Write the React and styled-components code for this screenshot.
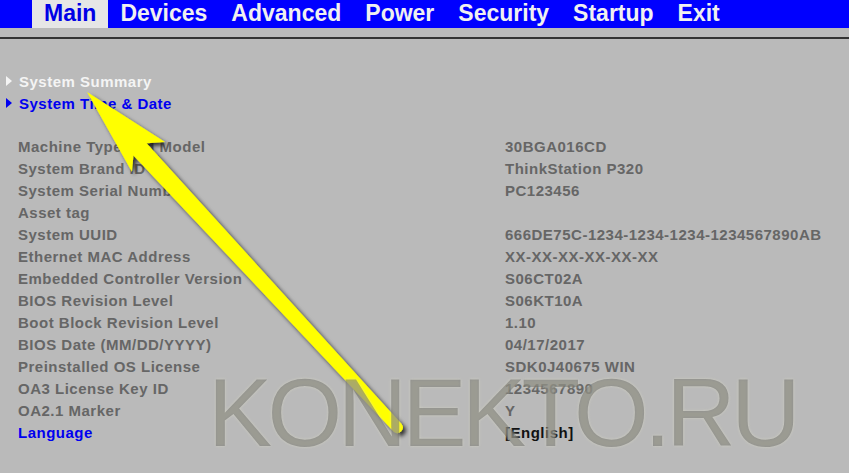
import React from "react";
import styled, { createGlobalStyle } from "styled-components";

const GlobalStyle = createGlobalStyle`
  html, body {
    margin: 0;
    padding: 0;
    background: #bababa;
  }
  body {
    font-family: "Liberation Sans", Arial, sans-serif;
  }
`;

const Page = styled.div`
  position: relative;
  width: 849px;
  height: 473px;
  overflow: hidden;
  background: #bababa;
`;

const MenuBar = styled.nav`
  display: flex;
  height: 28px;
  padding-left: 32px;
  background: #0000ff;
`;

const Tab = styled.div`
  padding: 0 12px;
  height: 28px;
  line-height: 26px;
  font-size: 23px;
  font-weight: bold;
  color: ${(p) => (p.$active ? "#0000e6" : "#f0f0f0")};
  background: ${(p) => (p.$active ? "#e6e6e6" : "transparent")};
`;

const Divider = styled.div`
  margin-top: 9px;
  height: 2px;
  background: #333333;
`;

const Content = styled.section`
  padding-top: 31px;
  font-size: 15px;
  font-weight: bold;
  letter-spacing: 0.5px;
`;

const LinkRow = styled.div`
  display: flex;
  align-items: center;
  height: 22px;
  padding-left: 6px;
  color: ${(p) => p.$color};
`;

const Triangle = styled.span`
  width: 0;
  height: 0;
  margin-right: 7px;
  border-top: 5px solid transparent;
  border-bottom: 5px solid transparent;
  border-left: 6px solid ${(p) => p.$color};
`;

const Spacer = styled.div`
  height: 22px;
`;

const InfoRow = styled.div`
  display: grid;
  grid-template-columns: 487px 1fr;
  height: 22px;
  line-height: 22px;
  padding-left: 18px;
  color: #666666;
`;

const Label = styled.span`
  color: ${(p) => p.$color || "inherit"};
`;

const Value = styled.span`
  color: ${(p) => p.$color || "inherit"};
`;

const Overlay = styled.svg`
  position: absolute;
  left: 0;
  top: 0;
  pointer-events: none;
`;

const Watermark = styled.div`
  position: absolute;
  left: 208px;
  top: 365px;
  font-family: "Liberation Sans", Arial, sans-serif;
  font-size: 96px;
  line-height: 96px;
  letter-spacing: -4.5px;
  color: rgba(80, 80, 80, 0.42);
  text-shadow: 0 0 3px rgba(225, 225, 200, 0.6);
  white-space: nowrap;
  pointer-events: none;
`;

const tabs = ["Main", "Devices", "Advanced", "Power", "Security", "Startup", "Exit"];

const info = [
  ["Machine Type and Model", "30BGA016CD"],
  ["System Brand ID", "ThinkStation P320"],
  ["System Serial Number", "PC123456"],
  ["Asset tag", ""],
  ["System UUID", "666DE75C-1234-1234-1234-1234567890AB"],
  ["Ethernet MAC Address", "XX-XX-XX-XX-XX-XX"],
  ["Embedded Controller Version", "S06CT02A"],
  ["BIOS Revision Level", "S06KT10A"],
  ["Boot Block Revision Level", "1.10"],
  ["BIOS Date (MM/DD/YYYY)", "04/17/2017"],
  ["Preinstalled OS License", "SDK0J40675 WIN"],
  ["OA3 License Key ID", "1234567890"],
  ["OA2.1 Marker", "Y"],
];

const Arrow = () => (
  <Overlay width="849" height="473" viewBox="0 0 849 473">
    <defs>
      <filter id="arrowShadow" x="-20%" y="-20%" width="140%" height="140%">
        <feDropShadow dx="3" dy="3" stdDeviation="2.2" floodColor="#000" floodOpacity="0.75" />
      </filter>
    </defs>
    <path
      d="M87,92 L165,142 L146.6,143.2 L401.8,424.3 A5.5,5.5 0 0 1 393.8,431.7 L133.4,155.4 L132,172 Z"
      fill="#ffff00"
      filter="url(#arrowShadow)"
    />
  </Overlay>
);

const App = () => {
  return (
    <Page>
      <GlobalStyle />
      <MenuBar>
        {tabs.map((t) => (
          <Tab key={t} $active={t === "Main"}>
            {t}
          </Tab>
        ))}
      </MenuBar>
      <Divider />
      <Content>
        <LinkRow $color="#f4f4f4">
          <Triangle $color="#f4f4f4" />
          System Summary
        </LinkRow>
        <LinkRow $color="#0000f0">
          <Triangle $color="#0000f0" />
          System Time &amp; Date
        </LinkRow>
        <Spacer />
        {info.map(([label, value]) => (
          <InfoRow key={label}>
            <Label>{label}</Label>
            <Value>{value}</Value>
          </InfoRow>
        ))}
        <InfoRow>
          <Label $color="#0000f0">Language</Label>
          <Value $color="#111111">[English]</Value>
        </InfoRow>
      </Content>
      <Arrow />
      <Watermark>KONEKTO.RU</Watermark>
    </Page>
  );
};

export default App;
